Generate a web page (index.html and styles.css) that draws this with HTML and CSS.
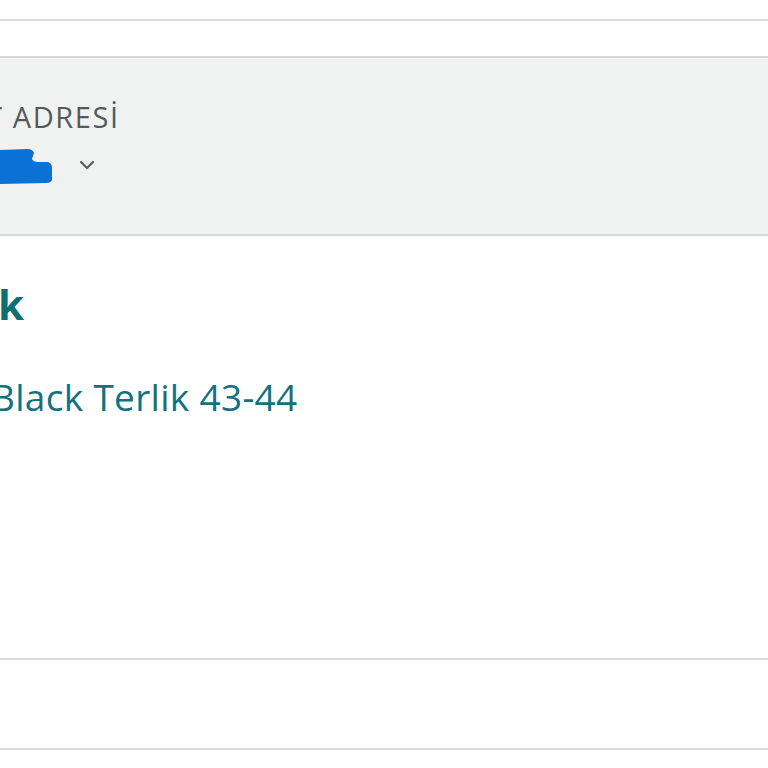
FILE: index.html
```html
<!DOCTYPE html>
<html lang="tr">
<head>
<meta charset="utf-8">
<title>Sipariş</title>
<link rel="stylesheet" href="styles.css">
</head>
<body>
<div class="page">
  <div class="rule rule-top"></div>
  <section class="address-box">
    <div class="label"><span class="cut">T</span> ADRESİ</div>
    <div class="address-row">
      <svg class="scribble" width="54" height="40" viewBox="0 0 54 40" aria-hidden="true">
        <path d="M0 4 L27 3 Q33 3 34 7 L32 13 Q33 16 38 16 L48 16 Q52 17 52 22 L52 34 Q51 37 46 37 L0 38 Z" fill="#0a72d6"/>
      </svg>
      <svg class="chevron" width="22" height="16" viewBox="0 0 22 16" aria-hidden="true">
        <path d="M5 5 L11 11 L17 5" fill="none" stroke="#5b5f5f" stroke-width="2.2" stroke-linecap="round" stroke-linejoin="round"/>
      </svg>
    </div>
  </section>
  <section class="item">
    <h2 class="status">k</h2>
    <a class="product" href="#">Black Terlik 43-44</a>
  </section>
  <div class="rule rule-mid"></div>
  <div class="rule rule-bottom"></div>
</div>
</body>
</html>
```
FILE: styles.css
```css
html, body {
  margin: 0;
  padding: 0;
  background: #ffffff;
  overflow: hidden;
}
.page {
  width: 768px;
  height: 768px;
  overflow: hidden;
  font-family: "Open Sans", "Noto Sans", sans-serif;
}
.rule {
  height: 0;
  border-top: 2px solid #dcdcdc;
}
.rule-top {
  margin-top: 19px;
}
.address-box {
  margin-top: 35px;
  height: 176px;
  background: #f0f2f2;
  border-top: 2px solid #d5d9d9;
  border-bottom: 2px solid #d5d9d9;
  display: flex;
  flex-direction: column;
}
.label {
  margin-top: 41px;
  margin-left: -14px;
  font-size: 29px;
  line-height: 36px;
  color: #565959;
  letter-spacing: 1.6px;
}
.cut {
  display: inline-block;
}
.address-row {
  display: flex;
  align-items: center;
  gap: 22px;
  margin-top: 11px;
}
.scribble {
  display: block;
}
.chevron {
  display: block;
  margin-top: -2px;
}
.item {
  height: 422px;
  display: flex;
  flex-direction: column;
}
.status {
  margin: 40px 0 0 -2px;
  font-size: 42px;
  line-height: 56px;
  font-weight: 700;
  color: #0e6f72;
}
.product {
  margin: 41px 0 0 -9px;
  font-size: 37px;
  line-height: 48px;
  color: #14727f;
  text-decoration: none;
  letter-spacing: 0.3px;
}
.rule-bottom {
  margin-top: 88px;
}
```
